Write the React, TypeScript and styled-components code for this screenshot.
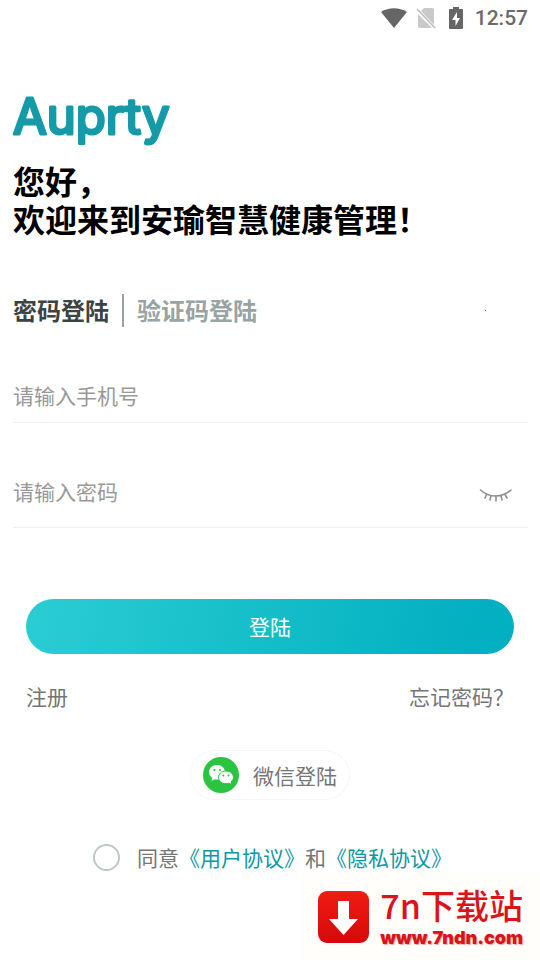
import React, { useState } from "react";
import styled, { createGlobalStyle } from "styled-components";

const GlobalStyle = createGlobalStyle`
  *, *::before, *::after { box-sizing: border-box; }
  body {
    margin: 0;
    background: #fff;
    font-family: "Noto Sans CJK SC", sans-serif;
    color: #757575;
  }
  button, input { font: inherit; color: inherit; }
  button { border: 0; padding: 0; background: none; cursor: pointer; }
`;

const Page = styled.main`
  min-height: 100vh;
  display: flex;
  flex-direction: column;
`;

const StatusBar = styled.header`
  height: 36px;
  padding-right: 12px;
  display: flex;
  align-items: center;
  justify-content: flex-end;
  font: 500 21px/36px Roboto, sans-serif;
  color: #6a6a6a;
`;

const WifiIcon = styled.svg`
  width: 26px;
  height: 20px;
  margin-right: 9px;
`;

const SimIcon = styled.svg`
  width: 20px;
  height: 22px;
  margin-right: 13px;
`;

const BatteryIcon = styled.svg`
  width: 14px;
  height: 22px;
  margin-right: 12px;
`;

const Content = styled.div`
  display: flex;
  flex-direction: column;
  padding: 54px 12px 0 13px;
`;

const Logo = styled.svg`
  width: 170px;
  height: 60px;
  overflow: visible;
  font-family: Inter, sans-serif;
  font-size: 49px;
  font-weight: 400;
`;

const Greeting = styled.h1`
  margin: 11px 0 0;
  font-size: 32px;
  line-height: 38px;
  font-weight: 700;
  color: #000;
`;

const Tabs = styled.div`
  display: flex;
  align-items: center;
  margin-top: 57px;
  height: 33px;
`;

const Tab = styled.button<{ $active: boolean }>`
  padding-bottom: 2px;
  font-size: 24px;
  line-height: 31px;
  font-weight: 700;
  color: ${(p) => (p.$active ? "#3c4342" : "#97a4a3")};
`;

const Divider = styled.span`
  width: 2px;
  height: 33px;
  margin: 0 13px;
  background: #97a4a3;
`;

const Dot = styled.span`
  width: 1px;
  height: 1px;
  margin: 0 42px 0 auto;
  background: #119aab;
`;

const Field = styled.div<{ $top: number; $height: number }>`
  display: flex;
  align-items: center;
  margin-top: ${(p) => p.$top}px;
  height: ${(p) => p.$height}px;
  border-bottom: 1px solid #f0f0f0;
`;

const TextInput = styled.input`
  flex: 1;
  min-width: 0;
  padding: 0;
  border: 0;
  outline: 0;
  background: none;
  font-size: 21px;
  line-height: 32px;
  color: #444;
  &::placeholder { color: #999; opacity: 1; }
`;

const EyeButton = styled.button`
  display: flex;
  margin-right: 15px;
  padding-top: 8px;
`;

const Actions = styled.section`
  display: flex;
  flex-direction: column;
  padding: 71px 14px 0 13px;
`;

const SubmitButton = styled.button`
  height: 55px;
  padding-bottom: 2px;
  border-radius: 28px;
  background: linear-gradient(100deg, #2bcdd3 0%, #14bdc8 50%, #03b0c1 90%);
  color: #fff;
  font-size: 21px;
`;

const LinkRow = styled.nav`
  display: flex;
  justify-content: space-between;
  margin-top: 26px;
`;

const PlainLink = styled.a`
  font-size: 21px;
  line-height: 32px;
  color: #757575;
  text-decoration: none;
`;

const WechatButton = styled.button`
  align-self: center;
  display: flex;
  align-items: center;
  gap: 14px;
  height: 50px;
  margin-top: 38px;
  padding: 0 12px;
  border: 1px solid #f6f6f6;
  border-radius: 25px;
  font-size: 21px;
`;

const Agreement = styled.div`
  display: flex;
  align-items: center;
  justify-content: center;
  margin-top: 41px;
  padding-left: 4px;
  font-size: 21px;
  line-height: 32px;
`;

const Check = styled.input`
  appearance: none;
  width: 27px;
  height: 27px;
  margin: 0 17px 0 0;
  border: 2px solid #bbc7c9;
  border-radius: 50%;
  &:checked { background: #119aab; }
`;

const PolicyLink = styled.a`
  color: #0e97a4;
  text-decoration: none;
`;

const SiteBadge = styled.footer`
  align-self: flex-end;
  display: flex;
  align-items: center;
  gap: 11px;
  height: 87px;
  padding: 0 17px 0 18px;
  background: #fffefa;
`;

const BadgeText = styled.div`
  display: flex;
  flex-direction: column;
  color: #d9141a;
`;

const BadgeName = styled.span`
  font-size: 34px;
  line-height: 42px;
  font-weight: 500;
`;

const BadgeUrl = styled.a`
  font: 900 18px/24px Inter, sans-serif;
  color: #d9141a;
  text-decoration: none;
  text-shadow: 1px 1px 1px #e9a5a0;
`;

export default function App() {
  const [mode, setMode] = useState("password");
  const [visible, setVisible] = useState(false);

  return (
    <>
      <GlobalStyle />
      <Page>
        <StatusBar>
          <WifiIcon viewBox="0 0 26 20" aria-hidden="true">
            <path d="M0 4C8-1 18-1 26 4L13 20Z" fill="#666" />
          </WifiIcon>
          <SimIcon viewBox="0 0 20 22" aria-hidden="true">
            <path d="M8 1H16Q18 1 18 3V18L5 4ZM2 7L16 21H4Q2 21 2 19Z" fill="#c9c9c9" />
            <path d="M1 2L19 21" stroke="#bdbdbd" strokeWidth="1.6" />
          </SimIcon>
          <BatteryIcon viewBox="0 0 14 22" aria-hidden="true">
            <path d="M4 0H10V2H13Q14 2 14 3V21Q14 22 13 22H1Q0 22 0 21V3Q0 2 1 2H4Z" fill="#666" />
            <path d="M8 5L3 13H6.5V19L11 11H8Z" fill="#fff" />
          </BatteryIcon>
          <time>12:57</time>
        </StatusBar>

        <Content>
          <Logo viewBox="0 0 170 60" role="img" aria-label="Auprty">
            <text x="0" y="44" fill="#159aa8" stroke="#159aa8" strokeWidth="3" strokeLinejoin="round">
              Auprty
            </text>
          </Logo>
          <Greeting>
            您好，
            <br />
            欢迎来到安瑜智慧健康管理！
          </Greeting>

          <Tabs>
            <Tab type="button" $active={mode === "password"} onClick={() => setMode("password")}>
              密码登陆
            </Tab>
            <Divider />
            <Tab type="button" $active={mode === "code"} onClick={() => setMode("code")}>
              验证码登陆
            </Tab>
            <Dot />
          </Tabs>

          <Field $top={40} $height={56}>
            <TextInput type="tel" aria-label="手机号" placeholder="请输入手机号" />
          </Field>
          <Field $top={31} $height={74}>
            <TextInput type={visible ? "text" : "password"} aria-label="密码" placeholder="请输入密码" />
            <EyeButton type="button" aria-label="显示密码" onClick={() => setVisible(!visible)}>
              <svg width="34" height="16" viewBox="0 0 34 16" fill="none" stroke="#8e8e8e" strokeWidth="1.6" strokeLinecap="round">
                <path d="M1.500 3C10 11 23 11 32 3M7.500 7.500L6 11M12 9L11 13M17 9.500V14M22 9L23 13M26 7.500L28 11" />
              </svg>
            </EyeButton>
          </Field>

          <Actions>
            <SubmitButton type="button">登陆</SubmitButton>
            <LinkRow>
              <PlainLink href="#register">注册</PlainLink>
              <PlainLink href="#forgot">忘记密码？</PlainLink>
            </LinkRow>
            <WechatButton type="button">
              <svg width="36" height="36" viewBox="0 0 36 36" aria-hidden="true">
                <circle cx="18" cy="18" r="18" fill="#2ac441" />
                <path d="M14 8C8.800 8 6 11.500 6 15C6 17.500 7.300 19.500 9 20.700L8.500 24L11.800 22.200C12.600 22.400 13.300 22.500 14 22.500C19 22.500 22 19 22 15.200C22 11.200 18.700 8 14 8Z" fill="#fff" />
                <path d="M23 14C18 14 15.500 17.300 15.500 20.300C15.500 23.800 18.500 26.700 23 26.700C24 26.700 25 26.500 25.800 26.200L28.600 27.500L28 25C29.500 23.800 30.400 22.200 30.400 20.300C30.400 17 27.500 14 23 14Z" fill="#fff" stroke="#2ac441" strokeWidth="1" />
                <g fill="#2ac441">
                  <circle cx="11.500" cy="13" r="1.100" />
                  <circle cx="17" cy="13" r="1.100" />
                  <circle cx="20.300" cy="18.500" r="1" />
                  <circle cx="25.500" cy="18.500" r="1" />
                </g>
              </svg>
              微信登陆
            </WechatButton>
          </Actions>
          <Agreement>
            <Check id="agree" type="checkbox" />
            <label htmlFor="agree">同意</label>
            <PolicyLink href="#terms">《用户协议》</PolicyLink>
            和
            <PolicyLink href="#privacy">《隐私协议》</PolicyLink>
          </Agreement>
        </Content>

        <SiteBadge>
          <svg width="51" height="52" viewBox="0 0 51 52" aria-hidden="true">
            <defs>
              <linearGradient id="badge" x1="0" y1="0" x2="0" y2="1">
                <stop offset="0" stopColor="#ef1c12" />
                <stop offset="1" stopColor="#d5090c" />
              </linearGradient>
            </defs>
            <rect width="51" height="52" rx="9" fill="url(#badge)" />
            <path d="M20 10H31V28H40L25.500 44L11 28H20Z" fill="#fff" />
          </svg>
          <BadgeText>
            <BadgeName>7n下载站</BadgeName>
            <BadgeUrl href="#site">www.7ndn.com</BadgeUrl>
          </BadgeText>
        </SiteBadge>
      </Page>
    </>
  );
}
